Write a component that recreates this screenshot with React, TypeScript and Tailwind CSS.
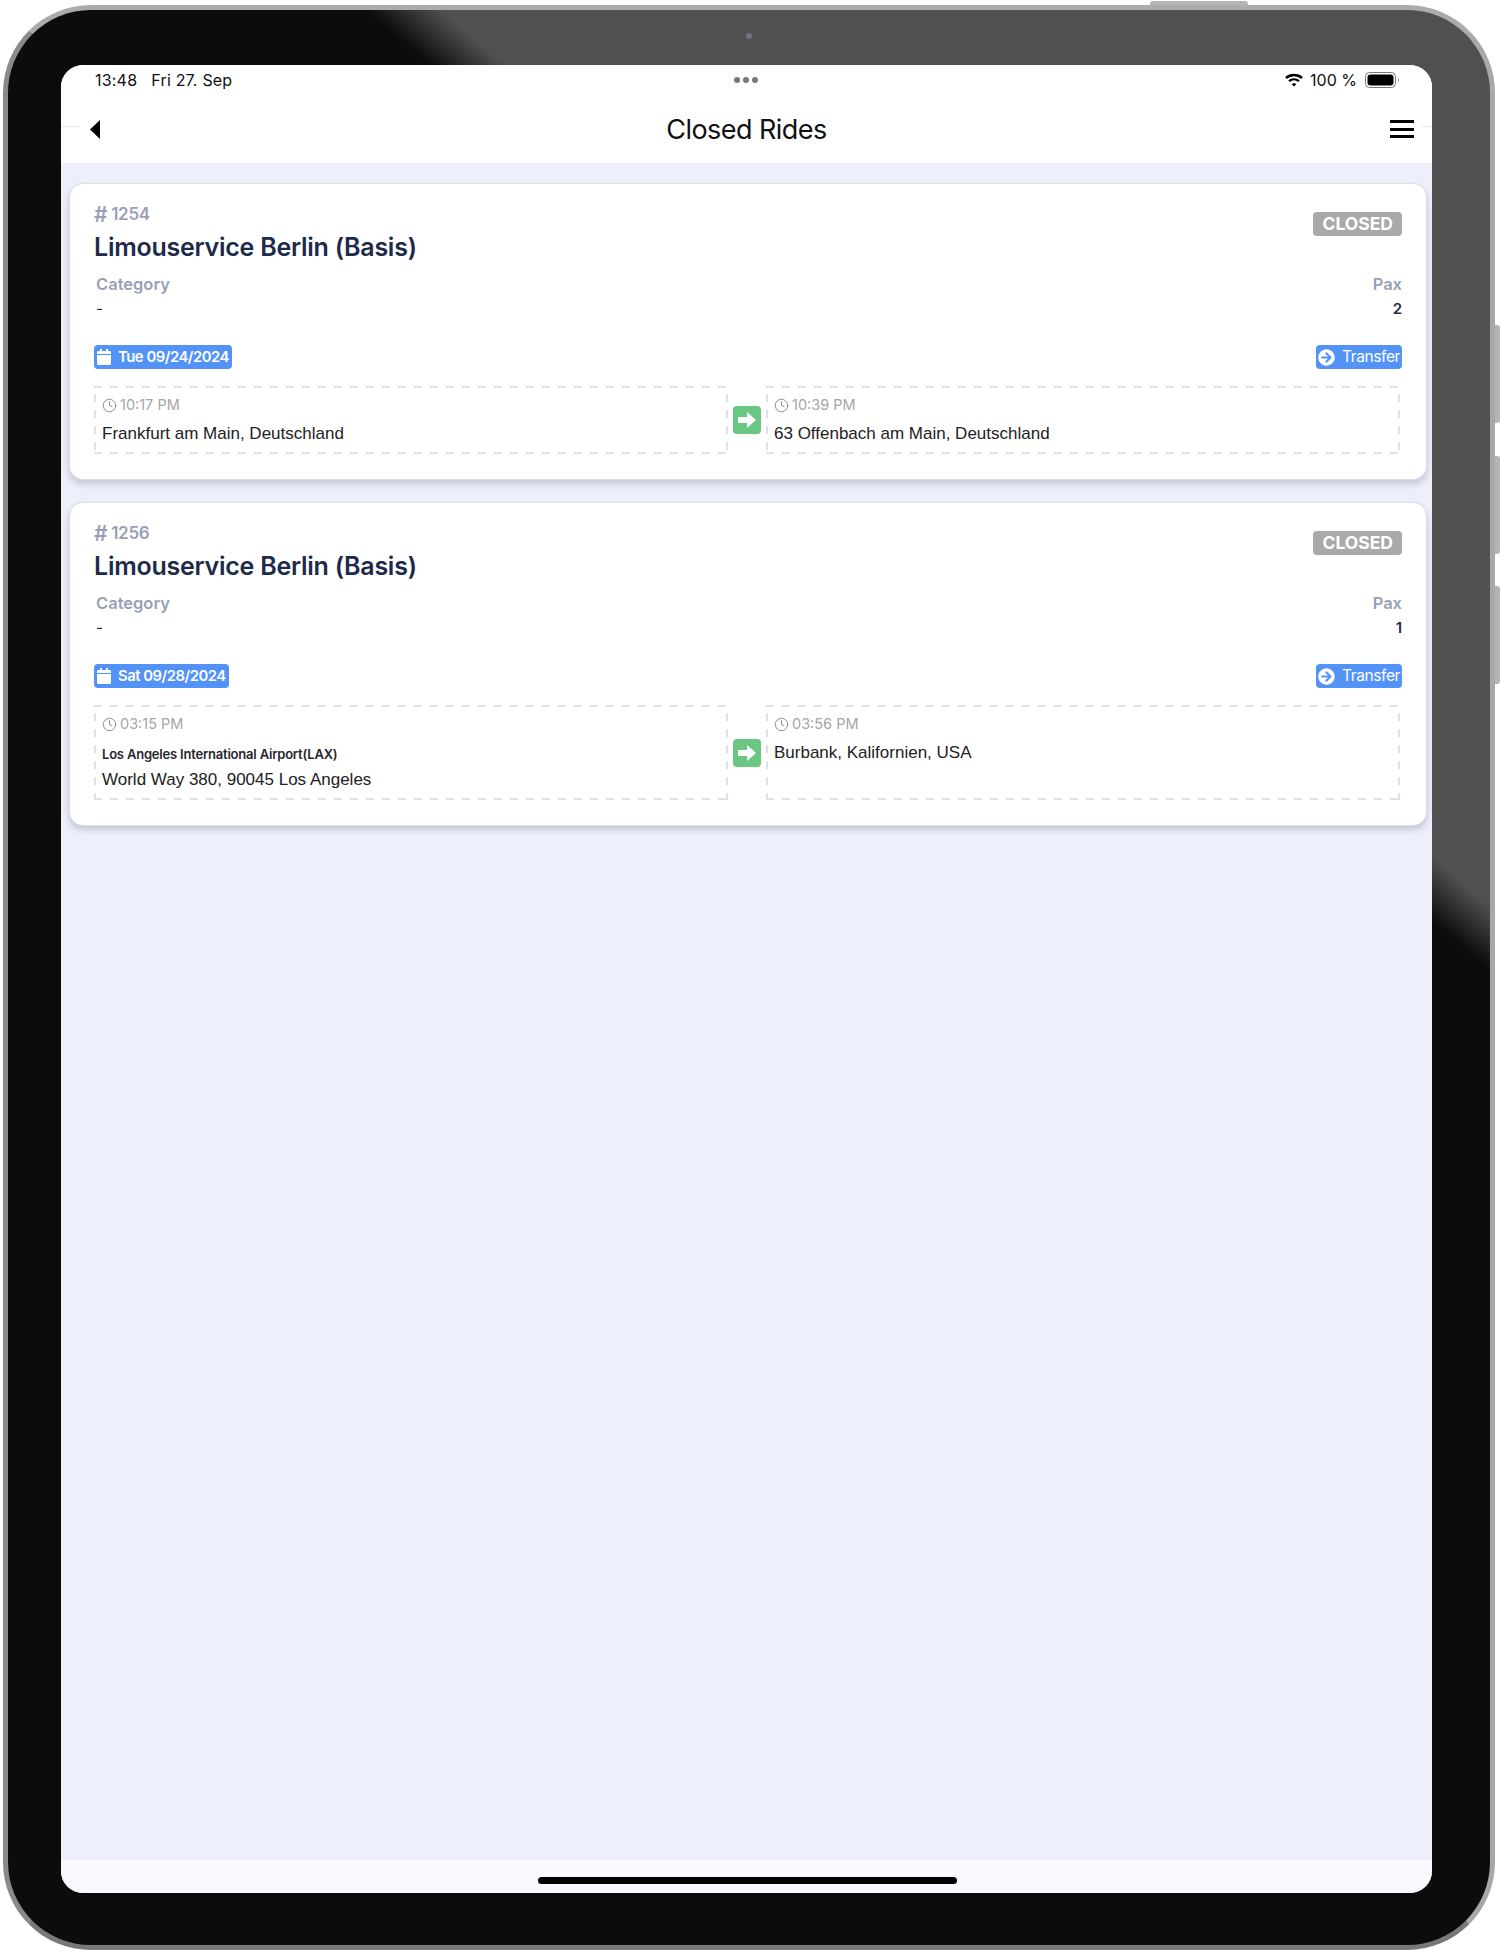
import { Clock } from "lucide-react";
import { FaArrowCircleRight, FaCalendar } from "react-icons/fa";

type Ride = {
  id: string;
  pax: string;
  date: string;
  from: { time: string; label?: string; address: string };
  to: { time: string; address: string };
};

const rides: Ride[] = [
  {
    id: "1254",
    pax: "2",
    date: "Tue 09/24/2024",
    from: { time: "10:17 PM", address: "Frankfurt am Main, Deutschland" },
    to: { time: "10:39 PM", address: "63 Offenbach am Main, Deutschland" },
  },
  {
    id: "1256",
    pax: "1",
    date: "Sat 09/28/2024",
    from: {
      time: "03:15 PM",
      label: "Los Angeles International Airport(LAX)",
      address: "World Way 380, 90045 Los Angeles",
    },
    to: { time: "03:56 PM", address: "Burbank, Kalifornien, USA" },
  },
];

const Stop = ({ time, label, address }: { time: string; label?: string; address: string }) => (
  <div className="flex-1 pt-[8px] pr-[8px] pb-[8px] pl-[8px] [background:linear-gradient(90deg,#dfe0ea_50%,transparent_50%)_0_0/16px_2px_repeat-x,linear-gradient(90deg,#dfe0ea_50%,transparent_50%)_0_100%/16px_2px_repeat-x,linear-gradient(0deg,#dfe0ea_50%,transparent_50%)_0_0/2px_16px_repeat-y,linear-gradient(0deg,#dfe0ea_50%,transparent_50%)_100%_0/2px_16px_repeat-y]">
    <div className="flex h-[22px] items-center gap-[3px] text-[14.5px] text-[#a6a6a6]">
      <Clock size={15} strokeWidth={1.6} className="text-[#8f8f8f]" />
      <span>{time}</span>
    </div>
    {label ? (
      <div className="mt-[10px] text-[13px] leading-[18px] font-semibold tracking-[-0.2px] text-[#26262e]">{label}</div>
    ) : null}
    <div className={`font-['Liberation_Sans',sans-serif] text-[17px] leading-[24px] text-[#222] ${label ? "mt-[5px]" : "mt-[6px]"}`}>
      {address}
    </div>
  </div>
);

const RideCard = ({ ride }: { ride: Ride }) => (
  <div className="rounded-[14px] border border-[#dcdde6] bg-white px-[24px] pt-[20px] pb-[25px] shadow-[0_4px_6px_rgba(40,40,70,0.2)]">
    <div className="flex items-start justify-between">
      <div>
        <div className="flex h-[22px] items-center text-[17px] font-semibold tracking-[-0.3px] text-[#9a9fb8]">
          <span className="mr-[4px] text-[21px]">#</span>
          {ride.id}
        </div>
        <div className="mt-[5px] text-[25px] leading-[32px] font-semibold tracking-[-0.25px] text-[#1e2a4a]">
          Limouservice Berlin (Basis)
        </div>
      </div>
      <div className="mt-[8px] flex h-[24px] items-center rounded-[4px] bg-[#a9a9a9] px-[9px] text-[17.5px] font-bold text-white">
        CLOSED
      </div>
    </div>

    <div className="mt-[10px] flex justify-between pl-[2px]">
      <div>
        <div className="text-[16.5px] leading-[22px] font-semibold text-[#9a9fb8]">Category</div>
        <div className="mt-[3px] text-[15px] leading-[22px] text-[#1e2a4a]">-</div>
      </div>
      <div className="text-right">
        <div className="text-[16.5px] leading-[22px] font-semibold text-[#9a9fb8]">Pax</div>
        <div className="mt-[3px] text-[15px] leading-[22px] font-semibold text-[#1e2a4a]">{ride.pax}</div>
      </div>
    </div>

    <div className="mt-[25px] flex items-center justify-between">
      <div className="flex h-[24px] items-center gap-[6px] rounded-[4px] bg-[#5393f8] pr-[3px] pl-[2px] text-[14.8px] font-semibold tracking-[-0.45px] text-white">
        <FaCalendar size={16} />
        {ride.date}
      </div>
      <div className="flex h-[24px] items-center gap-[7px] rounded-[4px] bg-[#5393f8] pr-[2px] pl-[2px] text-[15.5px] tracking-[-0.4px] text-white">
        <FaArrowCircleRight size={17} />
        Transfer
      </div>
    </div>

    <div className="mt-[17px] mr-[2px] flex items-stretch">
      <Stop {...ride.from} />
      <div className="flex w-[38px] shrink-0 items-center justify-center">
        <div className="flex h-[28px] w-[28px] items-center justify-center rounded-[4px] bg-[#69c781]">
          <svg width="18" height="16" viewBox="0 0 18 16" fill="#fff">
            <path d="M0 5 H9 V0 L18 8 L9 16 V11 H0 Z" />
          </svg>
        </div>
      </div>
      <Stop {...ride.to} />
    </div>
  </div>
);

const App = () => {
  return (
    <div className="relative h-[1953px] w-[1500px] overflow-hidden bg-white pt-[5px] pr-[5px] pb-[3px] pl-[3px] font-['Inter',sans-serif]">
      {/* hardware buttons */}
      <div className="absolute top-[1px] left-[1150px] h-[8px] w-[98px] rounded-t-[3px] bg-[#b4b4b4]" />
      <div className="absolute top-[325px] right-0 h-[98px] w-[8px] rounded-r-[3px] bg-[#b4b4b4]" />
      <div className="absolute top-[456px] right-0 h-[98px] w-[8px] rounded-r-[3px] bg-[#b4b4b4]" />
      <div className="absolute top-[586px] right-0 h-[98px] w-[8px] rounded-r-[3px] bg-[#b4b4b4]" />

      <div className="relative h-full w-full rounded-[88px] border-[5px] border-t-[#ababab] border-r-[#a8a8a8] border-b-[#787878] border-l-[#8a8a8a] bg-[linear-gradient(40.5deg,#0c0c0c_70%,#505050_72%)] pt-[55px] pl-[53px]">
        <div className="absolute top-[23px] left-[738px] h-[6px] w-[6px] rounded-full bg-[#6f7480]" />

        <div className="flex h-[1828px] w-[1371px] flex-col overflow-hidden rounded-[22px] bg-[#edeffb]">
          {/* status bar */}
          <div className="relative flex h-[30px] shrink-0 items-center justify-between bg-white pr-[32px] pl-[34px] text-[16px] text-[#111]">
            <div className="flex gap-[14px] tracking-[0.2px]">
              <span>13:48</span>
              <span>Fri 27. Sep</span>
            </div>
            <div className="absolute top-[12px] left-[673px] flex gap-[3px]">
              <div className="h-[6px] w-[6px] rounded-full bg-[#777]" />
              <div className="h-[6px] w-[6px] rounded-full bg-[#777]" />
              <div className="h-[6px] w-[6px] rounded-full bg-[#777]" />
            </div>
            <div className="flex items-center gap-[7px]">
              <svg width="18" height="14" viewBox="0 0 18 14" fill="none" stroke="#000" strokeWidth="2.4">
                <path d="M1 5 C5.5 1 12.5 1 17 5" />
                <path d="M4 8.2 C7 5.7 11 5.7 14 8.2" />
                <path d="M9 13.5 L6.6 11 C8 9.9 10 9.9 11.4 11 Z" fill="#000" stroke="none" />
              </svg>
              <span>100 %</span>
              <svg className="ml-[1px]" width="35" height="16" viewBox="0 0 35 16">
                <rect x="0.5" y="0.5" width="30" height="15" rx="4" fill="none" stroke="#777" />
                <rect x="2.5" y="2.5" width="26" height="11" rx="3" fill="#000" />
                <path d="M33 6 C34 6.5 34 9.5 33 10 Z" fill="#555" />
              </svg>
            </div>
          </div>

          {/* nav bar */}
          <div className="relative flex h-[68px] shrink-0 items-center justify-between bg-white pr-[18px] pl-[29px]">
            <div className="absolute top-[31px] left-0 h-px w-[19px] bg-[#e8e8e8]" />
            <div className="absolute top-[31px] right-0 h-px w-[10px] bg-[#e8e8e8]" />
            <svg width="10" height="19" viewBox="0 0 10 19" className="mt-[1px]">
              <path d="M10 0 L0 9.5 L10 19 Z" fill="#000" />
            </svg>
            <div className="mt-[2px] ml-[3px] text-[27px] tracking-[-0.55px] text-[#111]">Closed Rides</div>
            <div className="flex w-[24px] flex-col gap-[4.5px]">
              <div className="h-[3px] bg-black" />
              <div className="h-[3px] bg-black" />
              <div className="h-[3px] bg-black" />
            </div>
          </div>

          {/* rides */}
          <div className="flex flex-1 flex-col gap-[22px] pt-[20px] pr-[5px] pl-[8px]">
            {rides.map((ride) => (
              <RideCard key={ride.id} ride={ride} />
            ))}
          </div>

          {/* home indicator */}
          <div className="flex h-[33px] shrink-0 items-center justify-center bg-[#f8f8ff] pt-[7px] pl-[2px]">
            <div className="h-[7px] w-[419px] rounded-full bg-black" />
          </div>
        </div>
      </div>
    </div>
  );
};

export default App;
